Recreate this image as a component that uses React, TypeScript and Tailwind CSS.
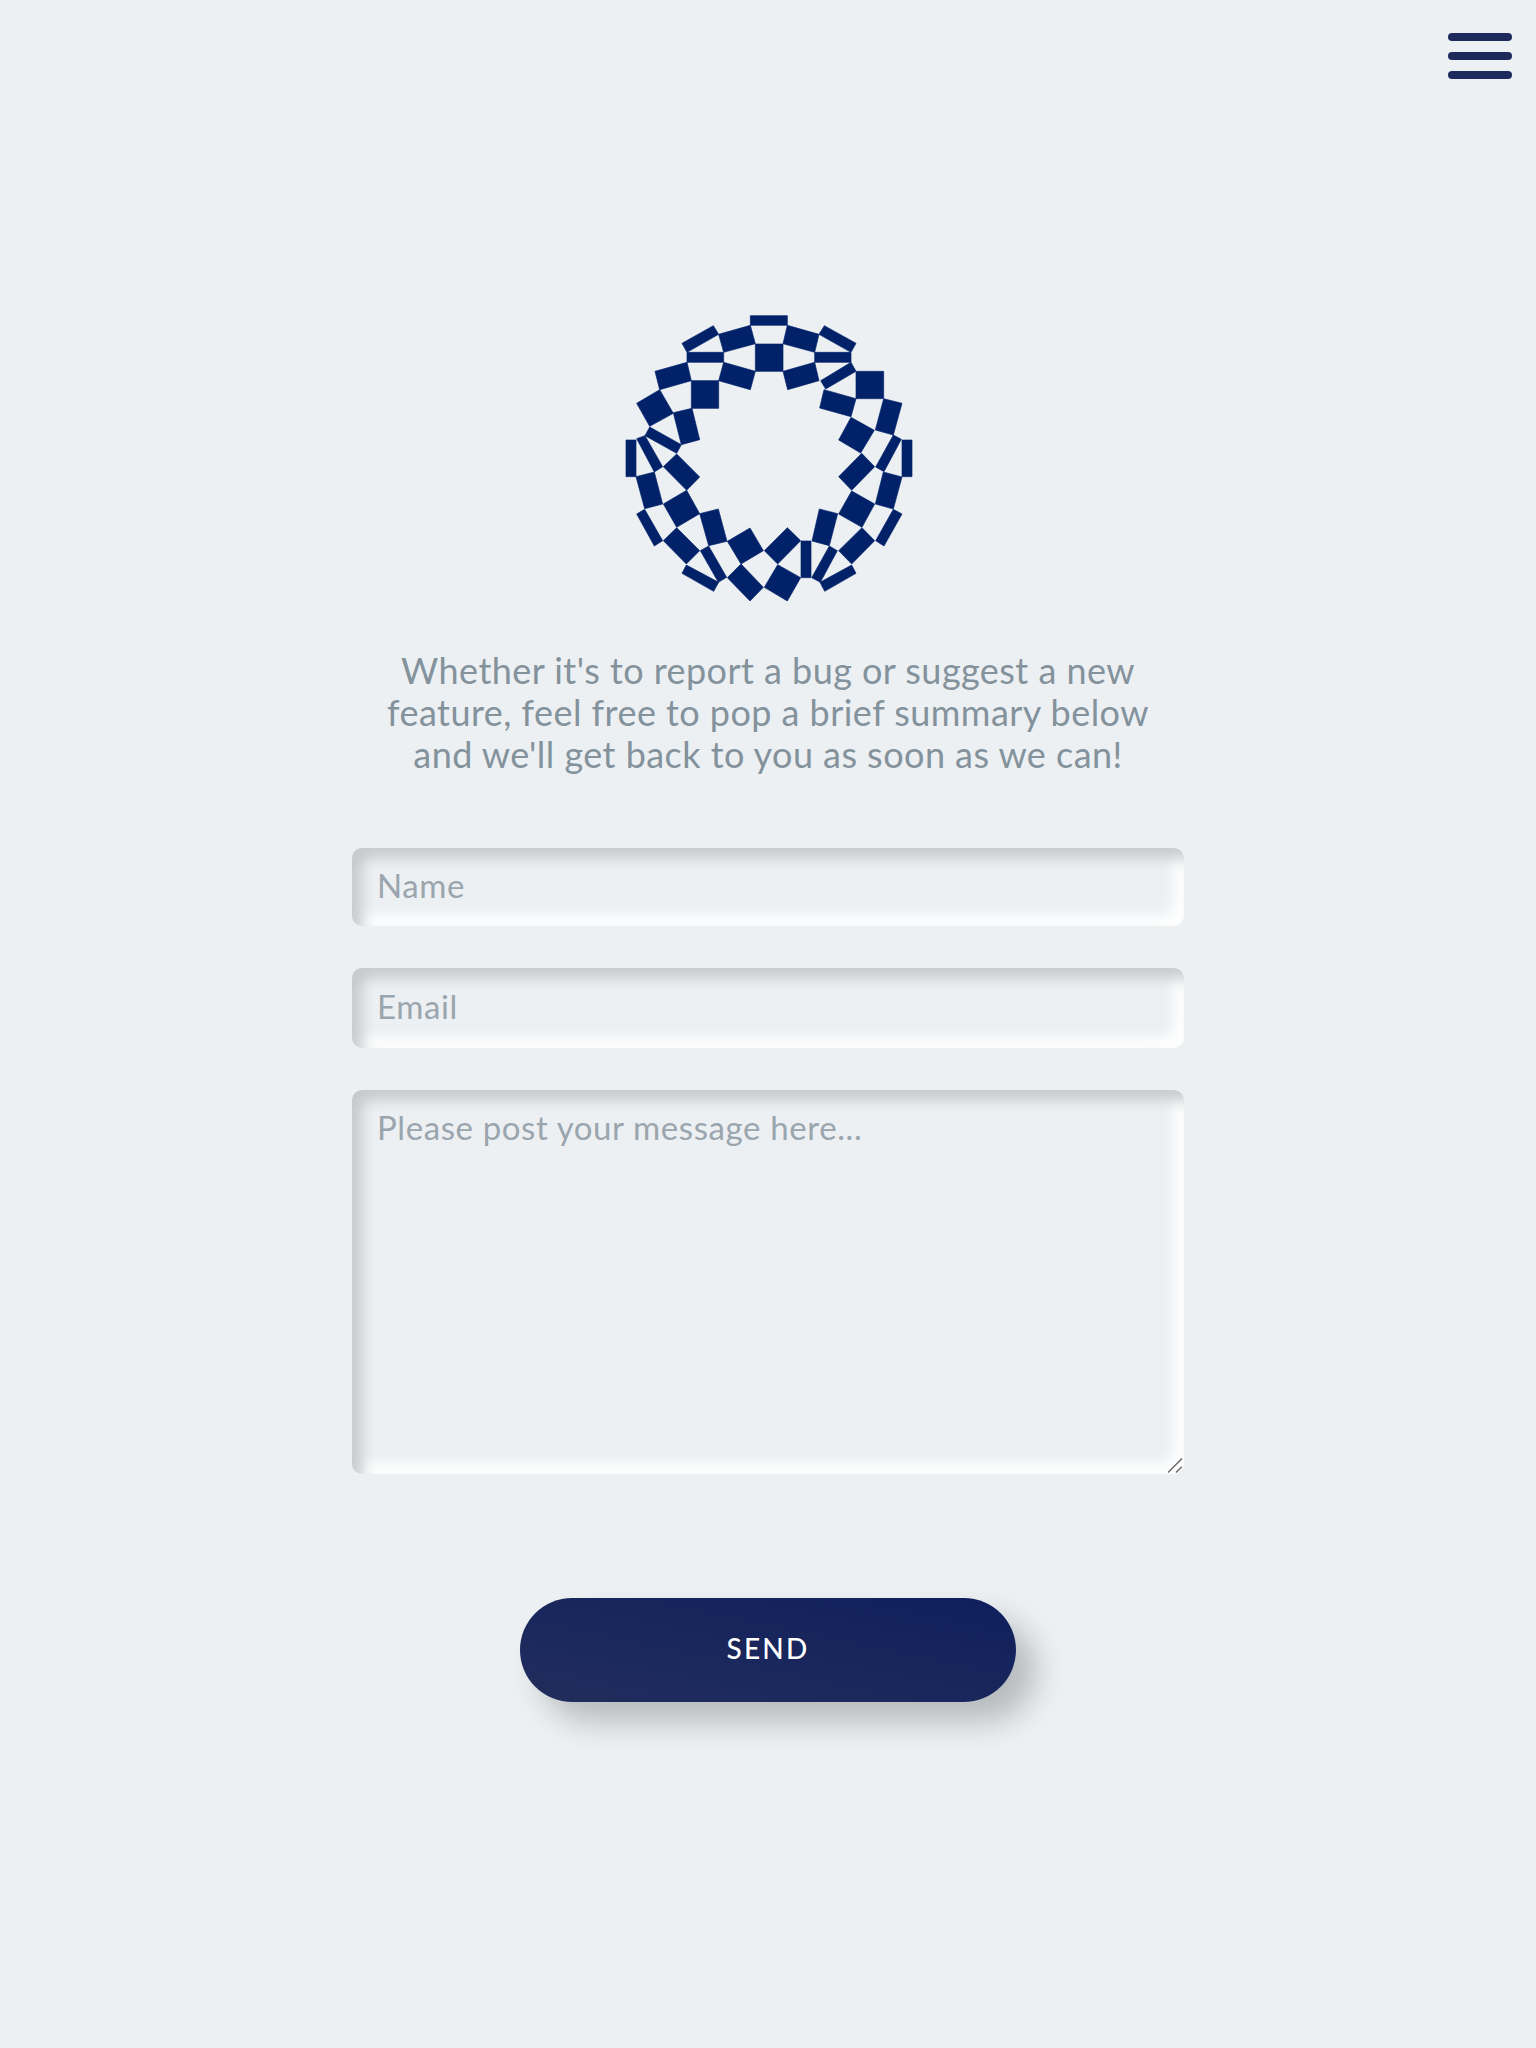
const logoPieces = [
  "421,47 532,47 532,76 421,76",
  "310,77 326,103 231,157 216,130",
  "326,103 421,76 436,131 341,157",
  "532,76 627,103 614,157 519,131",
  "643,77 738,130 723,157 627,103",
  "436,132 519,132 519,214 436,214",
  "231,157 341,157 341,187 231,187",
  "614,157 723,157 723,187 614,187",
  "341,187 436,214 421,269 326,242",
  "614,187 627,242 533,269 519,214",
  "135,214 231,187 244,242 149,269",
  "723,187 738,214 647,267 632,242",
  "244,242 326,242 326,325 244,325",
  "738,214 821,214 821,296 738,296",
  "642,269 738,296 723,350 629,324",
  "821,296 876,310 850,405 796,390",
  "149,269 190,340 119,379 80,310",
  "190,338 246,325 269,419 214,434",
  "119,381 214,434 200,460 105,407",
  "48,420 78,420 78,530 48,530",
  "80,416 105,407 158,500 133,516",
  "200,462 269,531 230,571 160,500",
  "78,530 133,516 158,612 104,626",
  "230,571 269,641 200,682 160,612",
  "269,641 325,627 351,724 296,737",
  "104,628 158,722 133,738 80,642",
  "200,683 269,752 229,792 160,722",
  "296,738 350,832 325,847 271,752",
  "229,795 326,847 311,874 216,820",
  "420,684 460,752 393,792 352,724",
  "393,792 460,862 420,903 352,833",
  "532,683 572,722 503,792 463,752",
  "503,794 572,833 532,903 463,862",
  "573,723 603,723 603,833 573,833",
  "628,627 683,641 658,737 606,723",
  "658,738 682,752 631,847 605,833",
  "723,352 793,391 752,459 686,420",
  "850,405 874,418 822,515 797,501",
  "876,420 906,420 906,530 876,530",
  "755,460 794,500 725,571 686,530",
  "820,516 876,531 850,627 796,612",
  "725,573 794,612 756,682 686,642",
  "850,628 876,642 822,738 797,722",
  "756,683 794,722 725,792 686,752",
  "725,795 738,820 644,874 630,847",
];

function Logo() {
  return (
    <svg viewBox="0 0 948 948" className="w-[316px] h-[316px] block" fill="#012169" stroke="#012169" strokeWidth="2">
      {logoPieces.map((points) => (
        <polygon key={points} points={points} />
      ))}
    </svg>
  );
}

const fieldClass =
  "block w-full rounded-[10px] bg-[#ecf0f3] px-[25px] text-[33px] tracking-[0.6px] text-[#84929c] outline-none placeholder:text-[#9aa5ae] shadow-[inset_10px_10px_14px_#c6cacd,inset_-10px_-10px_14px_#ffffff]";

export default function App() {
  return (
    <div className="min-h-screen w-full bg-[#ecf0f3] font-['Lato','Liberation_Sans',sans-serif]">
      {/* Header */}
      <div className="flex justify-end h-[300px] pt-[33px] pr-[24px]">
        <button className="flex flex-col gap-[11px] h-fit w-[64px]" aria-label="Menu">
          <span className="block h-[8px] w-full rounded-[4px] bg-[#1f2a5c]"></span>
          <span className="block h-[8px] w-full rounded-[4px] bg-[#1f2a5c]"></span>
          <span className="block h-[8px] w-full rounded-[4px] bg-[#1f2a5c]"></span>
        </button>
      </div>

      <div className="flex flex-col items-center">
        <Logo />

        <p className="mt-[33px] text-center text-[36px] leading-[42px] tracking-[0.45px] text-[#84929c]">
          Whether it's to report a bug or suggest a new
          <br />
          feature, feel free to pop a brief summary below
          <br />
          and we'll get back to you as soon as we can!
        </p>

        {/* Form */}
        <form className="mt-[73px] w-[832px] flex flex-col gap-[42px]">
          <input type="text" placeholder="Name" className={`${fieldClass} h-[78px] pb-[4px]`} />
          <input type="email" placeholder="Email" className={`${fieldClass} h-[80px] pb-[4px]`} />
          <div className="relative">
            <textarea
              placeholder="Please post your message here..."
              className={`${fieldClass} h-[384px] pt-[13px] resize-none`}
            />
            <svg viewBox="0 0 16 16" className="absolute right-0 bottom-0 w-4 h-4" stroke="#666666" strokeWidth="1.4" fill="none">
              <path d="M0 14.5 14 0.5" />
              <path d="M8 14.5 13.8 8.7" />
            </svg>
          </div>
        </form>

        <button className="mt-[124px] h-[104px] w-[496px] rounded-full bg-gradient-to-tr from-[#222d5c] to-[#0f1f5c] pb-[4px] text-[28px] font-medium tracking-[2.2px] text-white shadow-[20px_20px_30px_rgba(0,0,0,0.22)]">
          SEND
        </button>
      </div>
    </div>
  );
}
